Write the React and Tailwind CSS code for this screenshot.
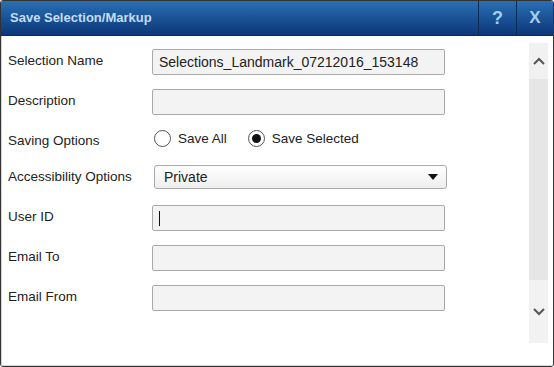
import React from 'react';

const font = { fontFamily: '"Liberation Sans", Arial, sans-serif' };

const Field = ({ label, children, className = '' }) => (
  <div className={`flex items-start ${className}`}>
    <div className="w-[144px] shrink-0 pt-[4px] text-[13.5px] leading-[15px] text-[#222]">{label}</div>
    {children}
  </div>
);

const TextBox = ({ value, caret }) => (
  <div className="w-[293px] h-[26px] rounded-[2px] border border-[#a9a9a9] bg-[#f3f3f3] flex items-center px-[6px] text-[14px] text-[#222]">
    {value}
    {caret && <span className="w-px h-[15px] bg-[#111]" />}
  </div>
);

const Radio = ({ checked, label }) => (
  <div className="flex items-center">
    <span className="w-[17px] h-[17px] rounded-full border border-[#555] bg-white flex items-center justify-center">
      {checked && <span className="w-[9px] h-[9px] rounded-full bg-[#111]" />}
    </span>
    <span className="ml-[7px] text-[13.5px] leading-[15px] text-[#222]">{label}</span>
  </div>
);

export default function App() {
  return (
    <div style={font} className="w-[554px] h-[367px] flex flex-col border border-[#333] rounded-[3px] overflow-hidden bg-white">
      {/* title bar */}
      <div className="h-[35px] shrink-0 flex bg-gradient-to-b from-[#2b6fb3] to-[#0c3779] border-b border-[#0a2c60]">
        <div className="flex-1 flex items-center pl-[9px] text-[13px] font-bold text-[#c3def6]">Save Selection/Markup</div>
        <div className="w-[38px] flex items-center justify-center border-l border-[#0b2a55] text-[18px] font-bold text-[#a9cdee]">?</div>
        <div className="w-[37px] flex items-center justify-center border-l border-[#0b2a55] text-[17px] font-bold text-[#a9cdee]">X</div>
      </div>

      {/* body */}
      <div className="flex-1 flex border-l border-b border-[#d4d4d4]">
        <div className="flex-1 flex flex-col pl-[6px] pt-[13px]">
          <Field label="Selection Name">
            <TextBox value="Selections_Landmark_07212016_153148" />
          </Field>
          <Field label="Description" className="mt-[14px]">
            <TextBox />
          </Field>
          <Field label="Saving Options" className="mt-[14px]">
            <div className="flex items-center gap-[21px] ml-[2px] pt-[1px]">
              <Radio label="Save All" />
              <Radio checked label="Save Selected" />
            </div>
          </Field>
          <Field label="Accessibility Options" className="mt-[17px]">
            <div className="ml-[2px] w-[293px] h-[24px] rounded-[3px] border border-[#aaa] bg-gradient-to-b from-white to-[#eeeeee] flex items-center justify-between pl-[9px] pr-[8px] text-[14px] text-[#222]">
              Private
              <svg width="10" height="6" viewBox="0 0 10 6"><path d="M0 0h10L5 6z" fill="#111" /></svg>
            </div>
          </Field>
          <Field label="User ID" className="mt-[16px]">
            <TextBox caret />
          </Field>
          <Field label="Email To" className="mt-[14px]">
            <TextBox />
          </Field>
          <Field label="Email From" className="mt-[14px]">
            <TextBox />
          </Field>
        </div>

        {/* scrollbar */}
        <div className="w-[19px] h-[300px] mt-[7px] mr-[5px] flex flex-col">
          <div className="h-[36px] bg-[#f1f1f1] flex items-center justify-center">
            <svg width="12" height="8" viewBox="0 0 12 8"><path d="M1 7l5-5 5 5" fill="none" stroke="#555" strokeWidth="2" /></svg>
          </div>
          <div className="flex-1 bg-[#e6e6e6]" />
          <div className="h-[63px] bg-[#f2f2f2] flex items-center justify-center">
            <svg width="12" height="8" viewBox="0 0 12 8"><path d="M1 1l5 5 5-5" fill="none" stroke="#555" strokeWidth="2" /></svg>
          </div>
        </div>
      </div>
    </div>
  );
}
